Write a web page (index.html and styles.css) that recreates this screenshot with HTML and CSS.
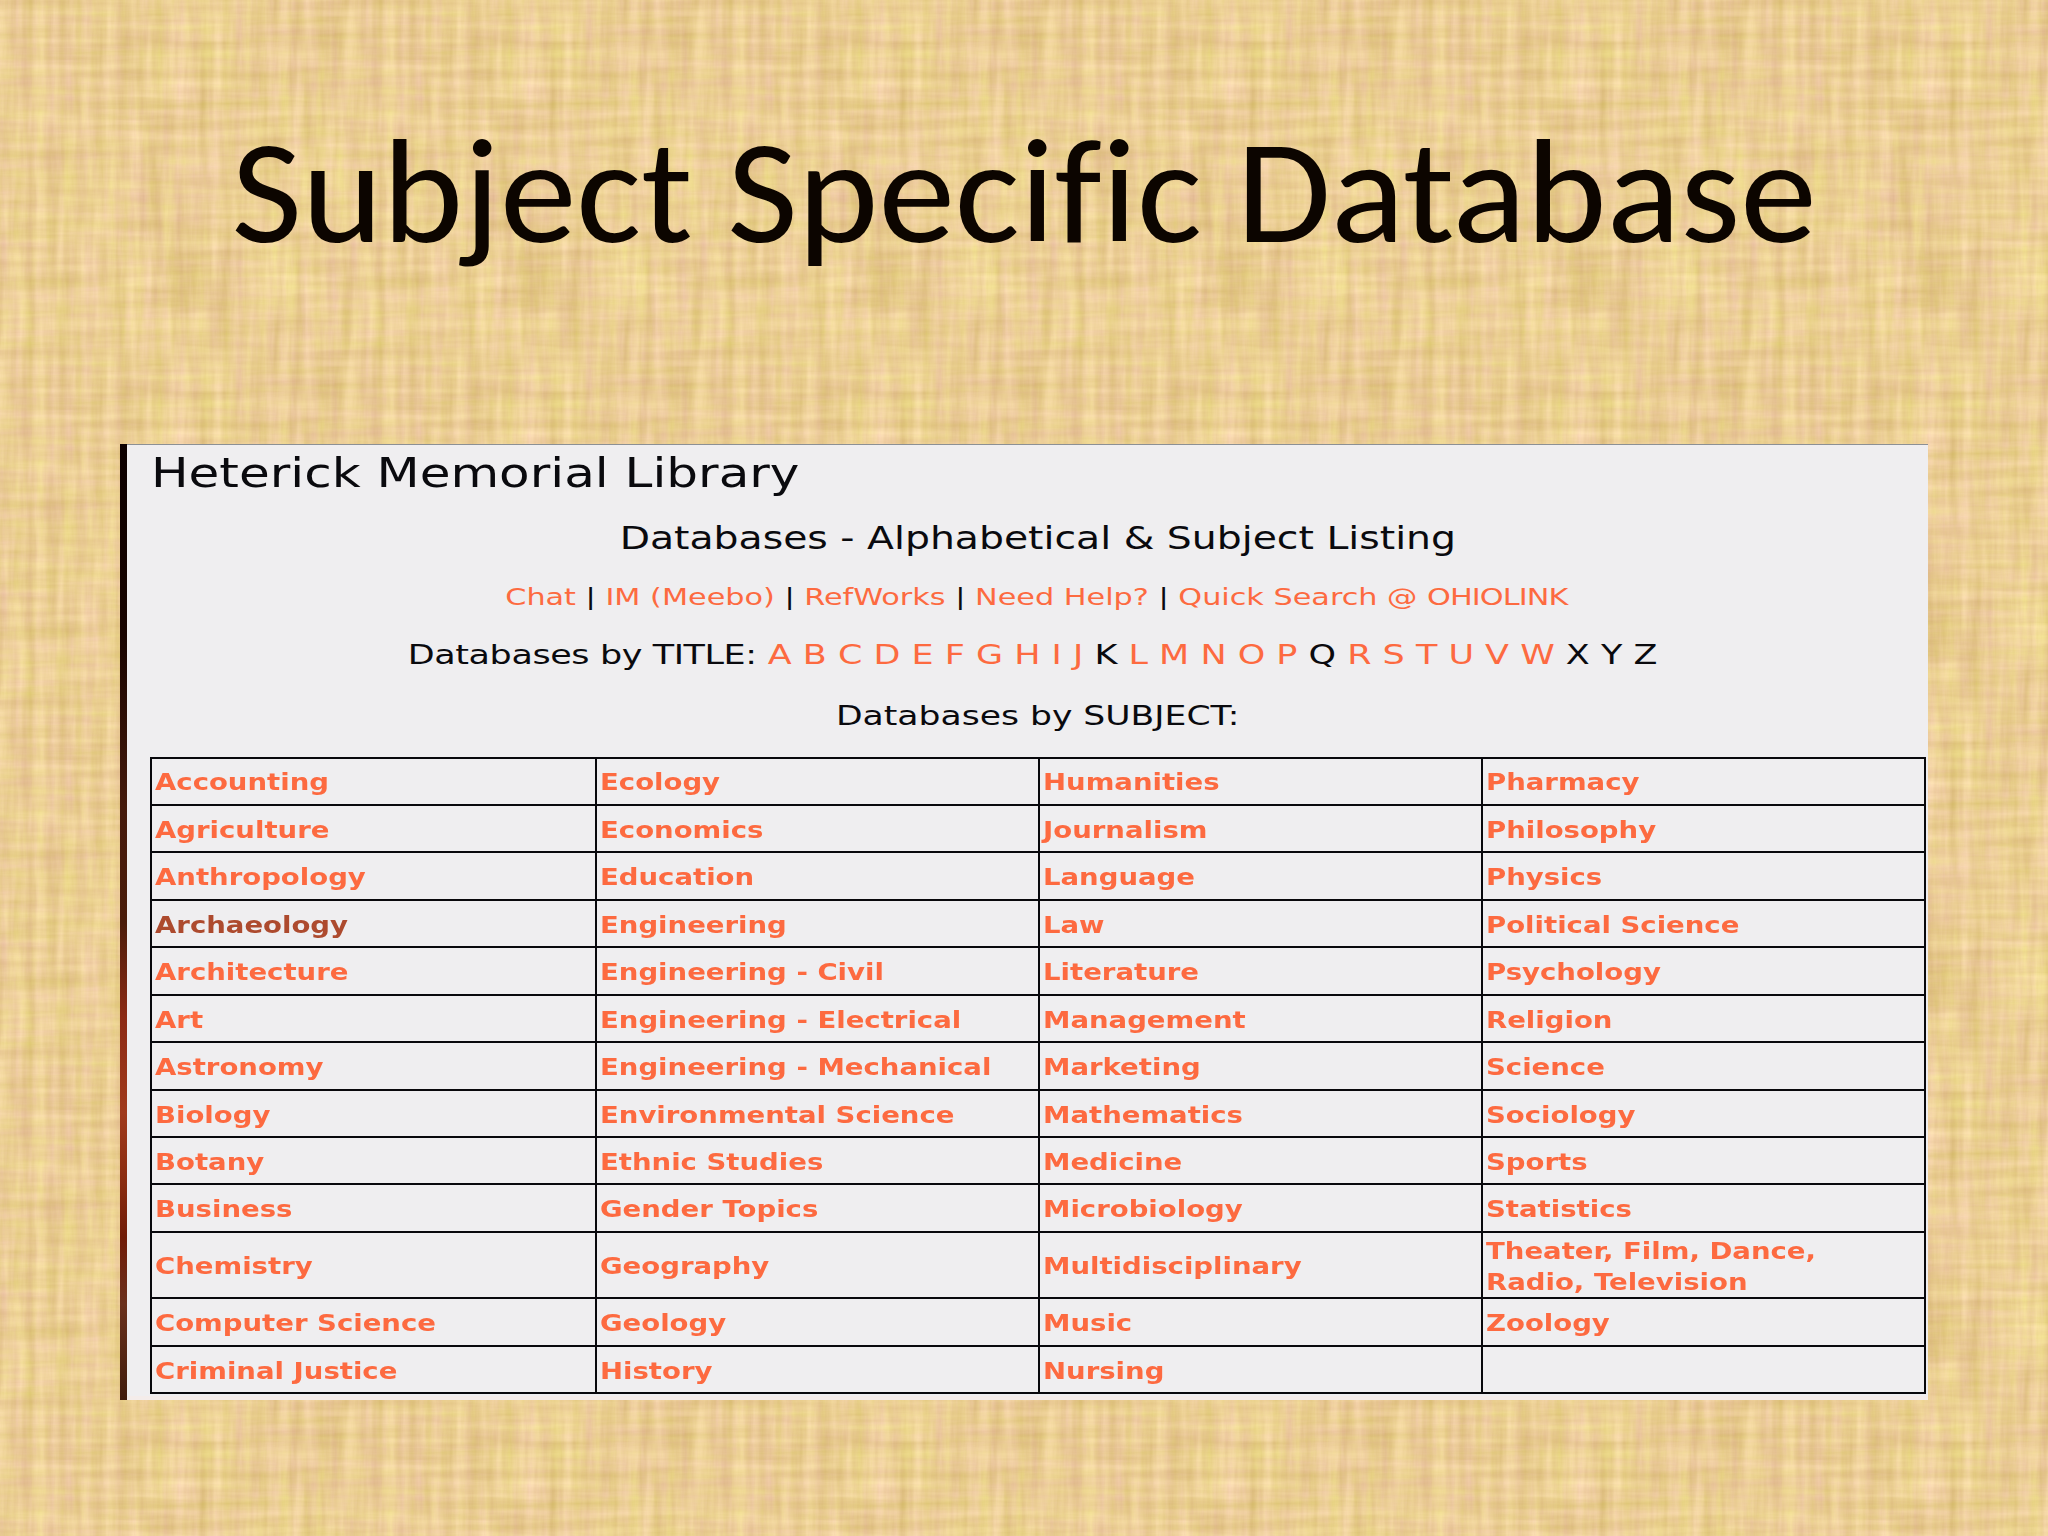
FILE: index.html
```html
<!DOCTYPE html>
<html lang="en">
<head>
<meta charset="utf-8">
<title>Subject Specific Database</title>
<link rel="stylesheet" href="styles.css">
</head>
<body>
<svg class="linen" width="2048" height="1536" aria-hidden="true">
  <filter id="weave" filterUnits="userSpaceOnUse" x="0" y="0" width="2048" height="1536" color-interpolation-filters="sRGB">
    <feTurbulence type="fractalNoise" baseFrequency="0.085 0.009" numOctaves="5" seed="4" stitchTiles="stitch" x="0" y="0" width="350" height="350"/>
    <feColorMatrix type="matrix" values="0.22 0.06 0 0 0.782  0.29 -0.05 0 0 0.688  0.3 0.26 0 0 0.3  0 0 0 0 1" result="warp"/>
    <feTurbulence type="fractalNoise" baseFrequency="0.009 0.1" numOctaves="5" seed="9" stitchTiles="stitch" x="0" y="0" width="350" height="350"/>
    <feColorMatrix type="matrix" values="0.2 0.06 0 0 0.792  0.27 -0.05 0 0 0.698  0.28 0.24 0 0 0.32  0 0 0 0 1" result="weft"/>
    <feComposite in="warp" in2="weft" operator="arithmetic" k1="0" k2="0.55" k3="0.45" k4="0" x="0" y="0" width="350" height="350"/>
    <feTile/>
  </filter>
  <rect width="2048" height="1536" filter="url(#weave)"/>
</svg>
<main class="slide">
  <h1 class="slide-title">Subject Specific Database</h1>
  <section class="panel">
    <div class="bar"></div>
    <div class="content">
      <h2 class="library"><span>Heterick Memorial Library</span></h2>
      <p class="listing"><span>Databases - Alphabetical &amp; Subject Listing</span></p>
      <p class="links"><span><a>Chat</a> | <a>IM (Meebo)</a> | <a>RefWorks</a> | <a>Need Help?</a> | <a>Quick Search @ <i>OHIOLINK</i></a></span></p>
      <p class="titles"><span><b>Databases by TITLE:</b> <a>A B C D E F G H I J</a> K <a>L M N O P</a> Q <a>R S T U V W</a> X Y Z</span></p>
      <p class="subject"><span>Databases by SUBJECT:</span></p>
      <div class="grid">
        <div><a>Accounting</a></div><div><a>Ecology</a></div><div><a>Humanities</a></div><div><a>Pharmacy</a></div>
        <div><a>Agriculture</a></div><div><a>Economics</a></div><div><a>Journalism</a></div><div><a>Philosophy</a></div>
        <div><a>Anthropology</a></div><div><a>Education</a></div><div><a>Language</a></div><div><a>Physics</a></div>
        <div><a class="active">Archaeology</a></div><div><a>Engineering</a></div><div><a>Law</a></div><div><a>Political Science</a></div>
        <div><a>Architecture</a></div><div><a>Engineering - Civil</a></div><div><a>Literature</a></div><div><a>Psychology</a></div>
        <div><a>Art</a></div><div><a>Engineering - Electrical</a></div><div><a>Management</a></div><div><a>Religion</a></div>
        <div><a>Astronomy</a></div><div><a>Engineering - Mechanical</a></div><div><a>Marketing</a></div><div><a>Science</a></div>
        <div><a>Biology</a></div><div><a>Environmental Science</a></div><div><a>Mathematics</a></div><div><a>Sociology</a></div>
        <div><a>Botany</a></div><div><a>Ethnic Studies</a></div><div><a>Medicine</a></div><div><a>Sports</a></div>
        <div><a>Business</a></div><div><a>Gender Topics</a></div><div><a>Microbiology</a></div><div><a>Statistics</a></div>
        <div><a>Chemistry</a></div><div><a>Geography</a></div><div><a>Multidisciplinary</a></div><div><a>Theater, Film, Dance,<br>Radio, Television</a></div>
        <div><a>Computer Science</a></div><div><a>Geology</a></div><div><a>Music</a></div><div><a>Zoology</a></div>
        <div><a>Criminal Justice</a></div><div><a>History</a></div><div><a>Nursing</a></div><div></div>
      </div>
    </div>
  </section>
</main>
</body>
</html>
```
FILE: styles.css
```css
* { box-sizing: border-box; }
body {
  margin: 0;
  background: #e8d08e;
  font-family: "DejaVu Sans", Verdana, sans-serif;
  color: #0a0a0e;
}
.linen { position: absolute; left: 0; top: 0; z-index: -1; }
.slide {
  width: 2048px;
  height: 1536px;
  overflow: hidden;
  padding: 97px 120px 0 120px;
}
.slide-title {
  margin: 0;
  height: 347px;
  font: 400 149px/188px Carlito, Calibri, Lato, sans-serif;
  font-variant-ligatures: none;
  text-align: center;
  white-space: nowrap;
  color: #0c0500;
  transform: scaleX(1.03);
}
.panel { display: flex; width: 1808px; height: 956px; }
.bar {
  width: 7px;
  background: linear-gradient(#0c0000 0, #180400 20%, #451a0c 38%, #4a1c0a 50%, #8c2a14 60%, #a03a1c 70%, #8a2c10 77%, #701c08 83%, #6a301c 90%, #401c0c 100%);
}
.content {
  flex: 1;
  padding: 0 1px 0 23px;
  border-top: 1px solid #8c9094;
  border-bottom: 4px solid #f4ecea;
  background: #efeef0;
}
.content h2, .content p {
  margin: 0;
  font-weight: 400;
  text-align: center;
  white-space: nowrap;
}
.content span { display: inline-block; }
.content a { color: #fd6a40; }
.content .library { padding-left: 1px; font-size: 40px; line-height: 56px; text-align: left; }
.library span { transform: scaleX(1.25); transform-origin: left; }
.listing { font-size: 31.5px; line-height: 75px; }
.listing span { transform: translateX(-1px) scaleX(1.249); }
.links { font-size: 23.5px; line-height: 42px; }
.links span { transform: translateX(-2px) scaleX(1.288); }
.links i { font-style: normal; letter-spacing: -0.7px; }
.titles { font-size: 26px; line-height: 74px; }
.titles span { transform: translateX(-6px) scaleX(1.345); }
.titles b { font-weight: 400; letter-spacing: -0.3px; }
.subject { font-size: 26px; line-height: 48px; }
.subject span { transform: translateX(-1px) scaleX(1.33); }
.grid {
  display: grid;
  width: 1776px;
  margin-top: 16.5px;
  grid-template-columns: 445px 442.5px 443px 443.5px;
  grid-template-rows: repeat(10, 47.45px) 66.3px repeat(2, 47.4px);
  border-right: 2px solid #08080c;
  border-bottom: 2px solid #08080c;
  font: 700 23px/30.5px "DejaVu Sans", Verdana, sans-serif;
}
.grid div {
  display: flex;
  align-items: center;
  padding: 3px 0 0 3px;
  border-top: 2px solid #08080c;
  border-left: 2px solid #08080c;
  white-space: nowrap;
}
.grid a { transform: scaleX(1.197); transform-origin: left; }
.grid .active { color: #ad4a2e; }
```
